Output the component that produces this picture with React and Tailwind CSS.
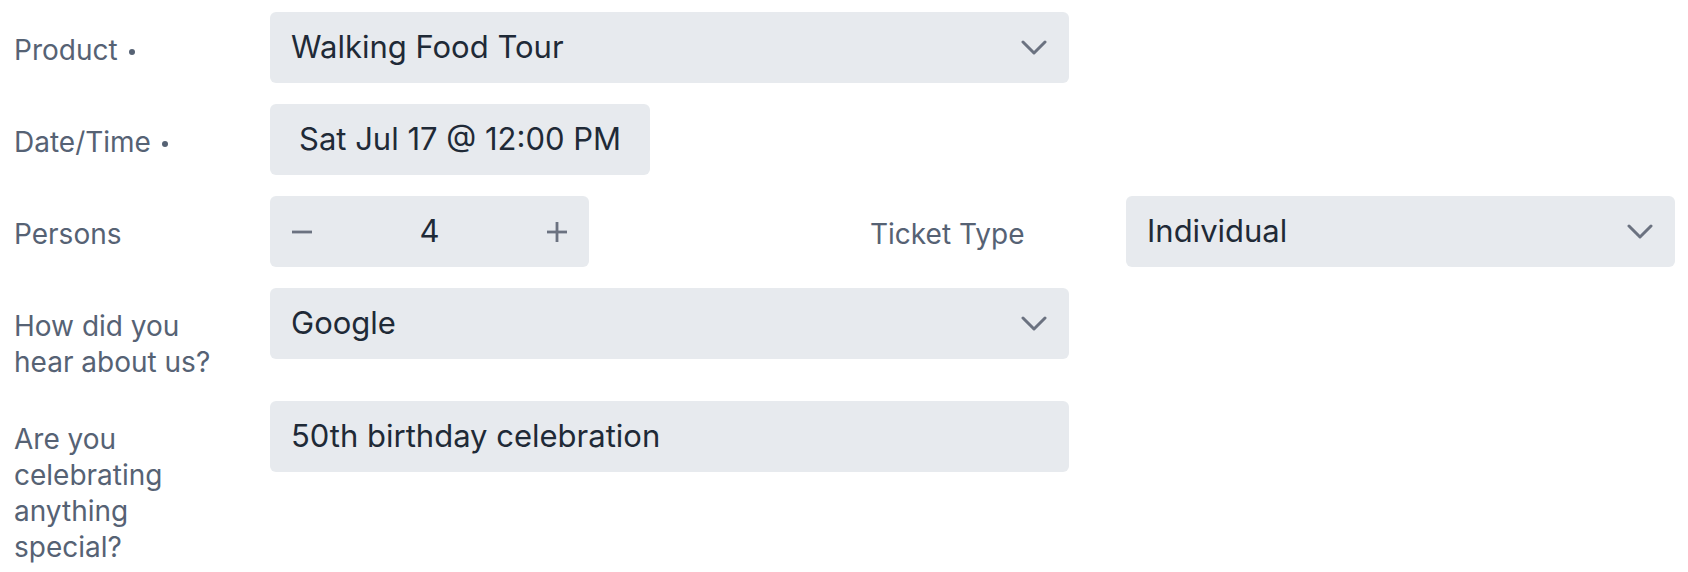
import { useState } from 'react';

const Chevron = () => (
  <svg width="26" height="15" viewBox="0 0 26 15" fill="none" className="shrink-0">
    <polyline points="2,2 13,13 24,2" stroke="#6b7280" strokeWidth="3" strokeLinecap="round" strokeLinejoin="round" />
  </svg>
);

const Label = ({ children, required }) => (
  <div className="w-[205px] mr-[51px] shrink-0 pt-[20px] text-[28px] leading-[36px] text-[#566274]">
    {children}
    {required && <span className="inline-block ml-[11px] w-[6px] h-[6px] rounded-full bg-[#566274] align-middle" />}
  </div>
);

const Select = ({ value, className = '' }) => (
  <div className={`h-[71px] bg-[#e7eaee] rounded-md flex items-center justify-between pl-[21px] pr-[22px] text-[31px] text-[#1f2a37] ${className}`}>
    <span>{value}</span>
    <Chevron />
  </div>
);

export default function App() {
  const [persons, setPersons] = useState(4);

  return (
    <div className="bg-white min-h-screen pl-[14px] pr-[13px] pt-[12px] flex flex-col gap-[21px]" style={{ fontFamily: 'Inter, "Noto Sans", sans-serif' }}>
      {/* Product */}
      <div className="flex items-start">
        <Label required>Product</Label>
        <Select value="Walking Food Tour" className="w-[799px]" />
      </div>

      {/* Date */}
      <div className="flex items-start">
        <Label required>Date/Time</Label>
        <button className="h-[71px] bg-[#e7eaee] rounded-md px-[29px] text-[31px] text-[#1f2a37]">
          Sat Jul 17 @ 12:00 PM
        </button>
      </div>

      {/* Persons + ticket type */}
      <div className="flex items-start">
        <Label>Persons</Label>
        <div className="w-[600px] shrink-0">
          <div className="w-[319px] h-[71px] bg-[#e7eaee] rounded-md flex items-center justify-between px-[21px] text-[31px] text-[#1f2a37]">
            <button onClick={() => setPersons(Math.max(1, persons - 1))} className="w-[22px] flex justify-center">
              <svg width="22" height="22" viewBox="0 0 22 22"><line x1="1" y1="11" x2="21" y2="11" stroke="#6b7280" strokeWidth="2.8" /></svg>
            </button>
            <span>{persons}</span>
            <button onClick={() => setPersons(persons + 1)} className="w-[22px] flex justify-center">
              <svg width="22" height="22" viewBox="0 0 22 22"><line x1="1" y1="11" x2="21" y2="11" stroke="#6b7280" strokeWidth="2.8" /><line x1="11" y1="1" x2="11" y2="21" stroke="#6b7280" strokeWidth="2.8" /></svg>
            </button>
          </div>
        </div>
        <Label>Ticket Type</Label>
        <Select value="Individual" className="flex-1" />
      </div>

      {/* Source */}
      <div className="flex items-start">
        <Label>How did you hear about us?</Label>
        <Select value="Google" className="w-[799px]" />
      </div>

      {/* Celebration */}
      <div className="flex items-start">
        <Label>Are you celebrating anything special?</Label>
        <div className="w-[799px] h-[71px] bg-[#e7eaee] rounded-md flex items-center px-[21px] text-[31px] text-[#1f2a37]">
          50th birthday celebration
        </div>
      </div>
    </div>
  );
}
